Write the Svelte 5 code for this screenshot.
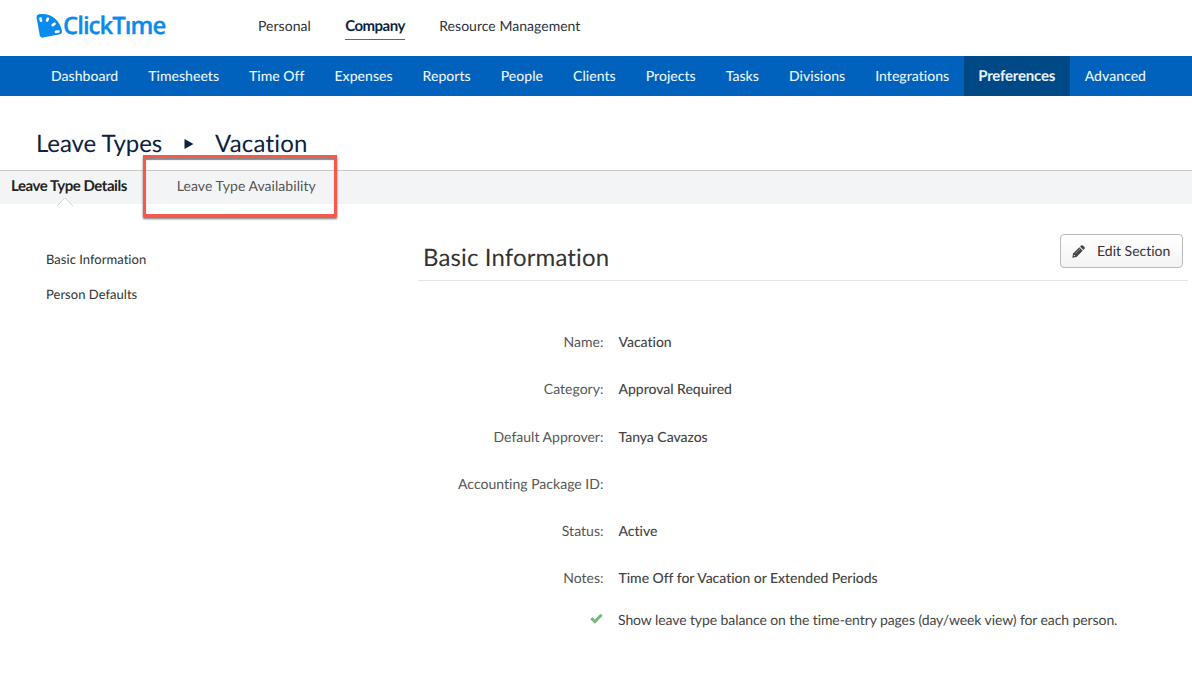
<script lang="ts">
  type Field = { label: string; value: string };

  const areas = ["Personal", "Company", "Resource Management"];
  const sections = [
    "Dashboard",
    "Timesheets",
    "Time Off",
    "Expenses",
    "Reports",
    "People",
    "Clients",
    "Projects",
    "Tasks",
    "Divisions",
    "Integrations",
    "Preferences",
    "Advanced",
  ];
  const tabs = ["Leave Type Details", "Leave Type Availability"];
  const fields: Field[] = [
    { label: "Name", value: "Vacation" },
    { label: "Category", value: "Approval Required" },
    { label: "Default Approver", value: "Tanya Cavazos" },
    { label: "Accounting Package ID", value: "" },
    { label: "Status", value: "Active" },
    { label: "Notes", value: "Time Off for Vacation or Extended Periods" },
  ];

  let area = $state("Company");
  let section = $state("Preferences");
  let tab = $state("Leave Type Details");
</script>

<header class="top">
  <svg class="logo" width="136" height="42" viewBox="0 -8 136 42" aria-label="ClickTime">
    <path
      d="M.5 5.200Q.500 2.700 3 2.300C14 .3 24.500 8 26 19.500Q26.200 21.700 24 22.300L7 25.600Q4.300 25.900 3.800 23.500Z"
      fill="#0a8bee"
    />
    <g stroke="#fff" stroke-width="2.600" stroke-linecap="round">
      <path d="M4.500 6.500l.5 2.300M11.900 6.600l-.8 1.900M18.600 11.700l-1.900 1.400M22.500 19.500l-2.600.4" />
    </g>
    <text x="27" y="22.300">ClickTıme</text>
  </svg>
  <nav class="areas">
    {#each areas as a}
      <button class:active={a === area} onclick={() => (area = a)}>{a}</button>
    {/each}
  </nav>
</header>

<nav class="sections">
  {#each sections as s}
    <button class:active={s === section} onclick={() => (section = s)}>{s}</button>
  {/each}
</nav>

<h1>
  <span>Leave Types</span>
  <svg width="10" height="10" viewBox="0 0 10 10"><path d="M.5 0L9.500 5L.5 10Z" fill="#0c2340" /></svg>
  <span>Vacation</span>
</h1>

<div class="tabs">
  {#each tabs as t}
    <button class:active={t === tab} onclick={() => (tab = t)}>
      {t}
      {#if t === tab}
        <svg class="notch" width="16" height="9" viewBox="0 0 16 9">
          <path d="M0 9L8 1L16 9" fill="#fff" stroke="#d3d4d6" />
        </svg>
      {/if}
    </button>
  {/each}
  <div class="highlight"></div>
</div>

<main>
  <aside>
    <span>Basic Information</span>
    <span>Person Defaults</span>
  </aside>
  <section>
    <div class="heading">
      <h2>Basic Information</h2>
      <button class="edit">
        <svg width="13" height="13" viewBox="0 0 13 13" fill="#444">
          <path d="M.3 12.700L1.100 8.500L7.300 2.300L10.700 5.700L4.500 11.900Z" />
          <path d="M8 1.600L9.200.5Q10.100-.1 10.900.6L12.400 2.100Q13.100 2.900 12.400 3.800L11.400 5Z" />
          <path d="M3.200 8.600L8 3.800" stroke="#bbb" stroke-width=".7" />
          <circle cx="2.400" cy="10.600" r=".7" fill="#eee" />
        </svg>
        <span>Edit Section</span>
      </button>
    </div>
    <dl>
      {#each fields as f}
        <dt>{f.label}:</dt>
        <dd>{f.value}</dd>
      {/each}
    </dl>
    <div class="option">
      <svg width="13" height="11" viewBox="0 0 13 11">
        <path d="M1.300 5.200L4.800 8.600L11.600 1.800" fill="none" stroke="#7ab67c" stroke-width="2.900" />
      </svg>
      <span>Show leave type balance on the time-entry pages (day/week view) for each person.</span>
    </div>
  </section>
</main>

<style>
  :global(body) {
    background: #fff;
    color: #444;
    font: 14px/20px Lato, sans-serif;
    font-variant-ligatures: none;
    text-rendering: geometricPrecision;
  }

  button {
    border: 0;
    padding: 0;
    background: none;
    color: inherit;
    font: inherit;
    font-variant-ligatures: none;
    letter-spacing: inherit;
    text-rendering: inherit;
    white-space: nowrap;
    cursor: pointer;
  }

  .top {
    display: flex;
    height: 56px;
    padding-left: 36px;
  }

  .logo {
    margin: 4px -4px 0 0;
  }

  .logo text {
    fill: #0a8bee;
    stroke: #0a8bee;
    stroke-width: 0.3px;
    font: 600 24px "Open Sans", sans-serif;
    letter-spacing: -1px;
  }

  .areas {
    display: flex;
    align-items: flex-start;
    gap: 34.5px;
    margin: 16px 0 0 90px;
    color: #2b333c;
    letter-spacing: 0.03px;
  }

  .areas button {
    height: 24px;
    padding-bottom: 3px;
    border-bottom: 1px solid transparent;
  }

  .areas .active {
    border-color: #0a80d8;
    color: #0c2340;
    font-size: 15px;
    font-weight: 700;
    letter-spacing: -0.54px;
  }

  .sections {
    display: flex;
    height: 40px;
    padding-left: 36px;
    background: #0062bd;
    color: #e8f2fb;
    font-weight: 500;
    letter-spacing: 0.03px;
  }

  .sections button {
    padding: 0 15px;
  }

  .sections .active {
    padding: 0 14.500px 0 14px;
    background: #004987;
    font-size: 15px;
    font-weight: 700;
    letter-spacing: -0.2px;
  }

  h1 {
    display: flex;
    align-items: center;
    height: 34px;
    margin: 0;
    padding: 31px 0 9px 36px;
    color: #0c2340;
    font-size: 24px;
    font-weight: 400;
  }

  h1 span:first-child {
    letter-spacing: -0.08px;
  }

  h1 span:last-child {
    letter-spacing: 0.2px;
  }

  h1 svg {
    margin: 0 21px 0 22px;
  }

  .tabs {
    position: relative;
    display: flex;
    height: 33px;
    padding-left: 11px;
    border-top: 1px solid #c8c8c8;
    background: #f3f4f6;
    color: #555;
    letter-spacing: 0.05px;
  }

  .tabs button {
    position: relative;
    height: 30px;
    margin-right: 50px;
  }

  .tabs .active {
    color: #222;
    font-size: 15px;
    font-weight: 700;
    letter-spacing: -0.46px;
  }

  .notch {
    position: absolute;
    top: 26px;
    left: 46px;
  }

  .highlight {
    position: absolute;
    top: -16px;
    left: 143px;
    width: 188px;
    height: 56px;
    border: 3px solid #f55a4e;
    box-shadow: 0 2px 2px #777, inset 0 2px 1px #888;
    pointer-events: none;
  }

  main {
    display: flex;
    padding-top: 30px;
  }

  aside {
    display: flex;
    flex-direction: column;
    gap: 15px;
    width: 372px;
    padding: 15px 0 0 46px;
    color: #333;
    font-size: 13px;
    letter-spacing: 0.03px;
  }

  section {
    width: 770px;
  }

  .heading {
    display: flex;
    align-items: flex-start;
    justify-content: space-between;
    height: 46px;
    padding: 0 5px;
    border-bottom: 1px solid #e5e5e5;
  }

  h2 {
    margin: 9px 0 0;
    color: #333;
    font-size: 24px;
    font-weight: 400;
    letter-spacing: 0.13px;
    line-height: 30px;
  }

  .edit {
    display: flex;
    align-items: center;
    gap: 12px;
    width: 123px;
    height: 34px;
    padding-left: 11px;
    border: 1px solid #bbb;
    border-radius: 4px;
    background: linear-gradient(#fff, #f3f3f3);
    color: #333;
  }

  dl {
    display: grid;
    grid-template-columns: 185.5px 1fr;
    grid-auto-rows: 47.2px;
    column-gap: 15px;
    align-items: center;
    margin: 37.700px 0 0;
  }

  dt {
    color: #555;
    letter-spacing: 0.02px;
    text-align: right;
  }

  dd {
    margin: 0;
    color: #444;
    font-weight: 500;
    letter-spacing: -0.03px;
  }

  .option {
    display: flex;
    align-items: center;
    gap: 15px;
    height: 20px;
    margin-top: 8px;
    padding-left: 172px;
    letter-spacing: -0.09px;
  }

  .option svg {
    margin-top: -3px;
  }
</style>
